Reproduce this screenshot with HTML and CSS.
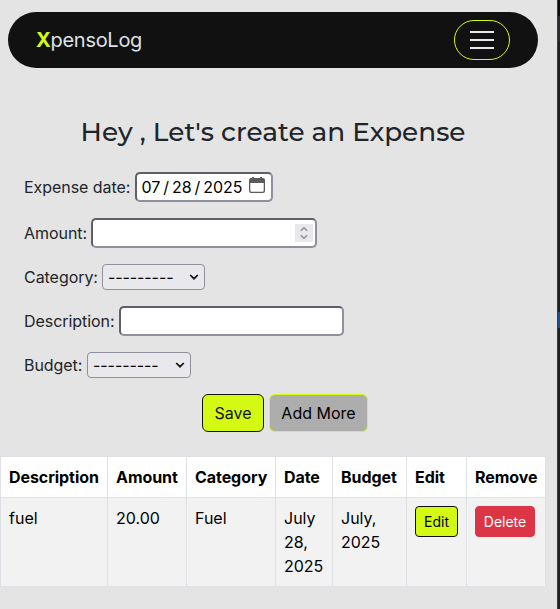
FILE: index.html
```html
<!DOCTYPE html>
<html lang="en">
<head>
<meta charset="utf-8">
<title>XpensoLog</title>
<link rel="stylesheet" href="styles.css">
</head>
<body>
<div class="page">
  <nav class="navbar">
    <a class="brand"><b>X</b>pensoLog</a>
    <button class="toggler" aria-label="Menu">
      <svg width="30" height="30" viewBox="0 0 30 30"><path d="M4 7h22M4 15h22M4 23h22" stroke="#e6eaed" stroke-width="2" stroke-linecap="square"/></svg>
    </button>
  </nav>
  <h1 class="title">Hey , Let's create an Expense</h1>
  <form class="form">
    <div class="row row-date"><label>Expense date:</label>
      <div class="field date"><span>07</span><i>/</i><span>28</span><i>/</i><span>2025</span>
        <svg width="16" height="16" viewBox="0 0 16 16"><path d="M3 0h2v1h6V0h2v1h1a2 2 0 0 1 2 2v11a2 2 0 0 1-2 2H2a2 2 0 0 1-2-2V3a2 2 0 0 1 2-2h1zM1.3 6v7.5a1.2 1.2 0 0 0 1.2 1.2h11a1.2 1.2 0 0 0 1.2-1.2V6z" fill="#5b5b5b" fill-rule="evenodd"/></svg>
      </div>
    </div>
    <div class="row row-amount"><label>Amount:</label>
      <div class="field amount"><span class="spin"><svg width="18" height="18" viewBox="0 0 18 18"><path d="M5.8 6.7 9 3.8l3.2 2.9M5.8 11.3 9 14.2l3.2-2.9" fill="none" stroke="#8f8f9d" stroke-width="1.5"/></svg></span></div>
    </div>
    <div class="row"><label>Category:</label>
      <div class="select">---------<svg width="10" height="6" viewBox="0 0 10 6"><path d="M1.2 1 5 4.7 8.8 1" fill="none" stroke="#111" stroke-width="1.7"/></svg></div>
    </div>
    <div class="row row-desc"><label>Description:</label><div class="field desc"></div></div>
    <div class="row row-budget"><label>Budget:</label>
      <div class="select budget">---------<svg width="10" height="6" viewBox="0 0 10 6"><path d="M1.2 1 5 4.7 8.8 1" fill="none" stroke="#111" stroke-width="1.7"/></svg></div>
    </div>
  </form>
  <div class="actions"><button class="btn save">Save</button><button class="btn more">Add More</button></div>
  <table class="table">
    <colgroup><col class="c1"><col class="c2"><col class="c3"><col class="c4"><col class="c5"><col class="c6"><col class="c7"></colgroup>
    <thead><tr><th>Description</th><th>Amount</th><th>Category</th><th>Date</th><th>Budget</th><th>Edit</th><th>Remove</th></tr></thead>
    <tbody><tr><td>fuel</td><td>20.00</td><td>Fuel</td><td>July 28, 2025</td><td>July, 2025</td><td><button class="btn small edit">Edit</button></td><td><button class="btn small delete">Delete</button></td></tr></tbody>
  </table>
</div>
<div class="edge"><div class="edge-top"></div><div class="edge-tab"></div><div class="edge-mid"></div><div class="edge-mark"></div></div>
</body>
</html>
```
FILE: styles.css
```css
* { box-sizing: border-box; }
body { margin: 0; height: 609px; display: flex; overflow: hidden; background: #e4e4e4; color: #212529; font: 16px/24px Inter, sans-serif; }
button { font: inherit; }
.page { width: 557px; flex: none; }
.navbar { margin: 12px 19px 0 8px; height: 56px; padding: 0 28px; border-radius: 28px; background: #111; display: flex; align-items: center; justify-content: space-between; }
.brand { color: #dee2e6; font-size: 20px; line-height: 30px; letter-spacing: -0.28px; }
.brand b { color: #d4fa13; }
.toggler { width: 56px; height: 40px; padding: 0; border: 1px solid #d4fa13; border-radius: 20px; background: transparent; display: flex; align-items: center; justify-content: center; }
.title { margin: 48px 0 0; padding-right: 11px; text-align: center; font: 500 26.32px/32px Montserrat, Inter, sans-serif; white-space: nowrap; }
.form { margin: 24px 0 0 24px; display: grid; gap: 16px; }
.row { display: flex; align-items: center; gap: 4px; height: 28px; }
.row label { letter-spacing: -0.05px; }
.row-date { height: 30px; gap: 4.7px; }
.row-amount { height: 30px; margin-bottom: -1px; }
.row-budget { gap: 4.7px; }
.field { height: 30px; border: 2px solid; border-color: #5f5f6b #8f8f9d #8f8f9d #5f5f6b; border-radius: 5px; background: #fff; }
.date { width: 138px; padding: 0 6px 0 4.5px; color: #000; letter-spacing: -0.06px; display: flex; align-items: center; }
.date i { font-style: normal; margin: 0 3px; }
.date svg { margin: -4px 0 0 auto; }
.amount { width: 226px; padding: 0 2px; display: flex; align-items: center; justify-content: flex-end; }
.spin { width: 18px; height: 18px; background: #e9e9ed; }
.spin svg { display: block; }
.desc { width: 225px; }
.select { width: 103px; height: 26px; padding: 0 5px; letter-spacing: -0.08px; border: 1px solid #8f8f9d; border-radius: 4px; background: #e9e9ed; color: #000; display: flex; align-items: center; justify-content: space-between; }
.budget { width: 104px; }
.actions { margin: 15px 0 0 202px; display: flex; gap: 5px; }
.btn { height: 38px; padding: 0; border: 1px solid #111; border-radius: 6px; color: #000; text-align: center; }
.save { width: 62px; background: #d4fa13; color: #111; }
.more { width: 99px; background: #adadad; border-color: #d4fa13; }
.table { width: 546px; margin-top: 24px; border-collapse: collapse; table-layout: fixed; color: #000; background: #fff; }
.table th, .table td { padding: 8px; border: 1px solid #dee2e6; text-align: left; vertical-align: top; }
.table th { font-weight: 700; white-space: nowrap; letter-spacing: -0.06px; }
.table td { background: #f2f2f2; }
.c1 { width: 107px; }
.c2 { width: 79px; }
.c3 { width: 89px; }
.c4 { width: 57px; }
.c5 { width: 74px; }
.c6 { width: 60px; }
.c7 { width: 79px; }
.small { display: block; height: 31px; border-radius: 4px; font-size: 14px; line-height: 21px; }
.edit { width: 43px; background: #d4fa13; }
.delete { width: 60px; background: #dc3545; border-color: #dc3545; color: #fff; }
.edge { width: 3px; flex: none; display: flex; flex-direction: column; border-left: 1px solid #3b3b42; background: #1f2024; }
.edge-top { height: 16px; background: #0c0c0d; }
.edge-tab { height: 25px; background: #2b2c31; }
.edge-mid { height: 271px; }
.edge-mark { height: 16px; background: #204e8a; }
```
